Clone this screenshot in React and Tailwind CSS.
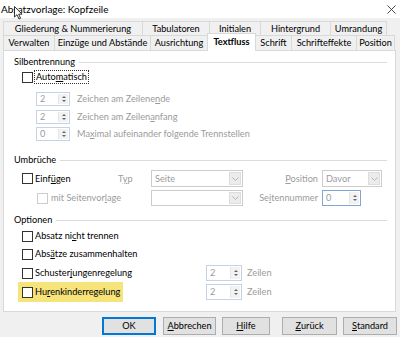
import React from 'react'

const gray = 'text-[#9b9b9b]'

function Check({ disabled }) {
  return (
    <span
      className={`inline-block w-[11px] h-[11px] shrink-0 border bg-white ${
        disabled ? 'border-[#cccccc]' : 'border-[#333333]'
      }`}
    />
  )
}

function SpinArrows() {
  return (
    <span className="flex flex-col items-center justify-center w-[10px] h-full bg-[#f2f2f2] border-l border-[#e6e6e6] gap-[2px]">
      <svg width="4" height="2" viewBox="0 0 4 2">
        <path d="M2 0 L4 2 L0 2 Z" fill="#666" />
      </svg>
      <svg width="4" height="2" viewBox="0 0 4 2">
        <path d="M0 0 L4 0 L2 2 Z" fill="#666" />
      </svg>
    </span>
  )
}

function Spin({ value, className }) {
  return (
    <span className={`flex items-stretch bg-white border shrink-0 ${className}`}>
      <span className={`flex-1 pl-[3px] flex items-center ${gray}`}>{value}</span>
      <span className="py-[1px] pr-[1px] flex">
        <SpinArrows />
      </span>
    </span>
  )
}

function Select({ value, className }) {
  return (
    <span className={`flex items-stretch bg-white border border-[#cccccc] shrink-0 ${className}`}>
      <span className={`flex-1 pl-[3px] flex items-center ${gray}`}>{value}</span>
      <span className="w-[12px] m-[1px] bg-[#ececec] border border-[#dddddd] flex items-center justify-center">
        <svg width="7" height="4" viewBox="0 0 7 4">
          <path d="M0.5 0.5 L3.5 3.5 L6.5 0.5" fill="none" stroke="#b5b5b5" strokeWidth="1" />
        </svg>
      </span>
    </span>
  )
}

function Group({ title }) {
  return (
    <div className="flex items-center h-[14px] pl-[10px] pr-[8px]">
      <span className="shrink-0">{title}</span>
      <span className="flex-1 h-px bg-[#dcdcdc] ml-[4px]" />
    </div>
  )
}

function Tab({ label, className = '' }) {
  return (
    <div
      className={`flex items-center justify-center whitespace-nowrap border-t border-r border-[#d9d9d9] bg-[#f0f0f0] ${className}`}
    >
      {label}
    </div>
  )
}

function Button({ children, className = '', primary }) {
  return (
    <button
      className={`h-[18px] flex items-center justify-center bg-[#e1e1e1] border ${
        primary ? 'border-[#0078d7] shadow-[inset_0_0_0_1px_#0078d7]' : 'border-[#adadad]'
      } ${className}`}
    >
      {children}
    </button>
  )
}

export default function App() {
  return (
    <div className="relative w-[400px] h-[337px] overflow-hidden bg-[#f0f0f0] text-[9.2px] leading-none text-black whitespace-nowrap font-['Lato',sans-serif]">
      {/* Title */}
      <div className="h-[18px] bg-white flex items-center justify-between pl-[1px] pr-[4px]">
        <span className="text-[10px]">Absatzvorlage: Kopfzeile</span>
        <svg width="9" height="9" viewBox="0 0 9 9">
          <path d="M0.5 0.5 L8.5 8.5 M8.5 0.5 L0.5 8.5" stroke="#333" strokeWidth="0.9" />
        </svg>
      </div>

      {/* Mouse cursor */}
      <svg className="absolute left-[14px] top-[6px] z-20" width="9" height="14" viewBox="0 0 9 14">
        <path d="M0.5 0.5 L0.5 11 L3 8.7 L5 13 L6.6 12.3 L4.7 8.2 L8 8.2 Z" fill="#fff" stroke="#000" strokeWidth="0.8" strokeLinejoin="round" />
      </svg>

      {/* Tabs */}
      <div className="pt-[3px] pl-[3px]">
        <div className="flex h-[14px]">
          <Tab label="Gliederung & Nummerierung" className="w-[140px] border-l" />
          <Tab label="Tabulatoren" className="w-[67px]" />
          <Tab label="Initialen" className="w-[51px]" />
          <Tab label="Hintergrund" className="w-[70px]" />
          <Tab label="Umrandung" className="w-[56px]" />
        </div>
        <div className="flex h-[15px]">
          <Tab label="Verwalten" className="w-[52px] border-l" />
          <Tab label="Einzüge und Abstände" className="w-[96px]" />
          <Tab label="Ausrichtung" className="w-[57px]" />
          <div className="relative z-10 -mt-[2px] h-[18px] w-[49px] -ml-px bg-white border-x border-t border-[#d9d9d9] flex items-center justify-center font-bold pb-[1px]">
            Textfluss
          </div>
          <Tab label="Schrift" className="w-[36px]" />
          <Tab label="Schrifteffekte" className="w-[65px]" />
          <Tab label="Position" className="w-[38px]" />
        </div>
      </div>

      {/* Panel */}
      <div className="ml-[3px] w-[393px] h-[262px] bg-white border border-[#d9d9d9] flex flex-col">
        <div className="mt-[4px]">
          <Group title="Silbentrennung" />
        </div>
        <div className="mt-[1px] h-[14px] flex items-center pl-[18px]">
          <Check />
          <span className="ml-[2px] px-[1px] py-[1px] outline outline-1 outline-dotted outline-[#333]">
            Auto<u>m</u>atisch
          </span>
        </div>

        {[
          ['2', <>Zeichen am Zeilene<u>n</u>de</>, 'mt-[8px]'],
          ['2', <>Zeichen am Zeilen<u>a</u>nfang</>, 'mt-[4px]'],
          ['0', <>Ma<u>x</u>imal aufeinander folgende Trennstellen</>, 'mt-[3px]'],
        ].map(([v, label, mt], i) => (
          <div key={i} className={`h-[14px] flex items-center pl-[32px] ${mt}`}>
            <Spin value={v} className="w-[34px] h-[14px] border-[#c4d2e4]" />
            <span className={`ml-[7px] ${gray}`}>{label}</span>
          </div>
        ))}

        <div className="mt-[12px]">
          <Group title="Umbrüche" />
        </div>
        <div className="mt-[3px] h-[17px] flex items-center">
          <div className="w-[114px] pl-[18px] flex items-center">
            <Check />
            <span className="ml-[2px]">
              Einf<u>ü</u>gen
            </span>
          </div>
          <span className={`w-[33px] ${gray}`}>
            T<u>y</u>p
          </span>
          <Select value="Seite" className="w-[92px] h-[17px]" />
          <span className={`w-[75px] text-right ${gray}`}>
            <u>P</u>osition
          </span>
          <Select value="Davor" className="ml-[4px] w-[60px] h-[17px]" />
        </div>
        <div className="mt-[3px] h-[16px] flex items-center">
          <div className="w-[147px] pl-[33px] flex items-center">
            <Check disabled />
            <span className={`ml-[3px] ${gray}`}>
              mit Seitenvor<u>l</u>age
            </span>
          </div>
          <Select value="" className="w-[92px] h-[16px]" />
          <span className={`w-[75px] text-right ${gray}`}>
            Se<u>i</u>tennummer
          </span>
          <Spin value="0" className="ml-[4px] w-[39px] h-[16px] border-[#7fa6d9]" />
        </div>

        <div className="mt-[7px]">
          <Group title="Optionen" />
        </div>
        <div className="mt-[2px] h-[14px] flex items-center pl-[18px]">
          <Check />
          <span className="ml-[2px]">
            Absatz ni<u>c</u>ht trennen
          </span>
        </div>
        <div className="mt-[4px] h-[14px] flex items-center pl-[18px]">
          <Check />
          <span className="ml-[2px]">
            Abs<u>ä</u>tze zusammenhalten
          </span>
        </div>
        <div className="mt-[4px] h-[16px] flex items-center pl-[14px]">
          <div className="w-[105px] pl-[4px] flex items-center">
            <Check />
            <span className="ml-[2px]">
              Schuster<u>j</u>ungenregelung
            </span>
          </div>
          <Spin value="2" className="ml-[83px] w-[36px] h-[16px] border-[#c4d2e4]" />
          <span className={`ml-[5px] ${gray}`}>Zeilen</span>
        </div>
        <div className="mt-[1px] h-[20px] flex items-center pl-[14px]">
          <div className="w-[105px] h-[20px] pl-[4px] flex items-center bg-[#f6e37a]">
            <Check />
            <span className="ml-[2px]">
              Hu<u>r</u>enkinderregelung
            </span>
          </div>
          <Spin value="2" className="ml-[83px] w-[36px] h-[16px] border-[#c4d2e4]" />
          <span className={`ml-[5px] ${gray}`}>Zeilen</span>
        </div>
      </div>

      {/* Buttons */}
      <div className="mt-[5px] flex pl-[102px]">
        <Button primary className="w-[54px]">
          OK
        </Button>
        <Button className="ml-[7px] w-[53px]">
          <u>A</u>bbrechen
        </Button>
        <Button className="ml-[6px] w-[48px]">
          <u>H</u>ilfe
        </Button>
        <Button className="ml-[12px] w-[55px]">
          <u>Z</u>urück
        </Button>
        <Button className="ml-[6px] w-[54px]">
          <u>S</u>tandard
        </Button>
      </div>
    </div>
  )
}
